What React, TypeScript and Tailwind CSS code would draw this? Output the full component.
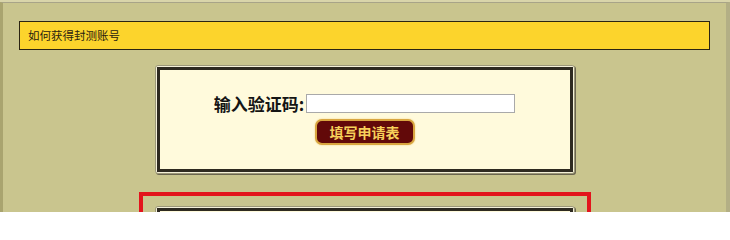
import React from 'react';

const cjk = '"Noto Sans CJK SC", "Liberation Sans", sans-serif';

function Panel({ children, className = '' }: { children?: React.ReactNode; className?: string }) {
  return (
    <div className={`mx-auto w-[420px] rounded-[3px] border border-[#9c9878] bg-[#f4f0d8] p-px shadow-[1px_1px_0_#6b6650] ${className}`}>
      <div className="h-full border-[3px] border-[#2e2a20] bg-[#fffadc]">{children}</div>
    </div>
  );
}

export default function App() {
  return (
    <div className="w-[730px] h-[212px] overflow-hidden bg-[#d9d5aa]" style={{ fontFamily: cjk }}>
      <div className="mt-[2px] h-[220px] border-t border-l-[3px] border-r-[4px] border-t-[#a8a488] border-l-[#a9a46f] border-r-[#b3af85] bg-[#c9c58e] pt-[18px]">
        {/* top notice bar */}
        <div className="ml-[16px] w-[691px] h-[29px] border-[1.5px] border-[#2b2412] bg-[#fcd42c] flex items-center pl-[8px] text-[11.5px] text-[#2a2210]">
          如何获得封测账号
        </div>

        {/* verify code panel */}
        <Panel className="mt-[15px] h-[109px]">
          <div className="flex flex-col items-center pt-[24px]">
            <div className="flex items-center">
              <span className="text-[17px] font-bold text-[#141414] leading-none">输入验证码:</span>
              <input className="ml-[2px] w-[209px] h-[19px] border border-[#a9a9a9] bg-white outline-none" />
            </div>
            <button className="mt-[6px] w-[100px] h-[26px] rounded-[7px] border-2 border-[#d9a640] bg-[#620909] text-[14px] font-bold text-[#f7d05a] shadow-[0_0_2px_#f0d080] leading-none">
              填写申请表
            </button>
          </div>
        </Panel>

        {/* highlighted box */}
        <div className="mx-auto mt-[18px] w-[452px] h-[60px] border-[4px] border-[#e3141c] pt-[10px]">
          <Panel className="h-[60px]" />
        </div>
      </div>
    </div>
  );
}
